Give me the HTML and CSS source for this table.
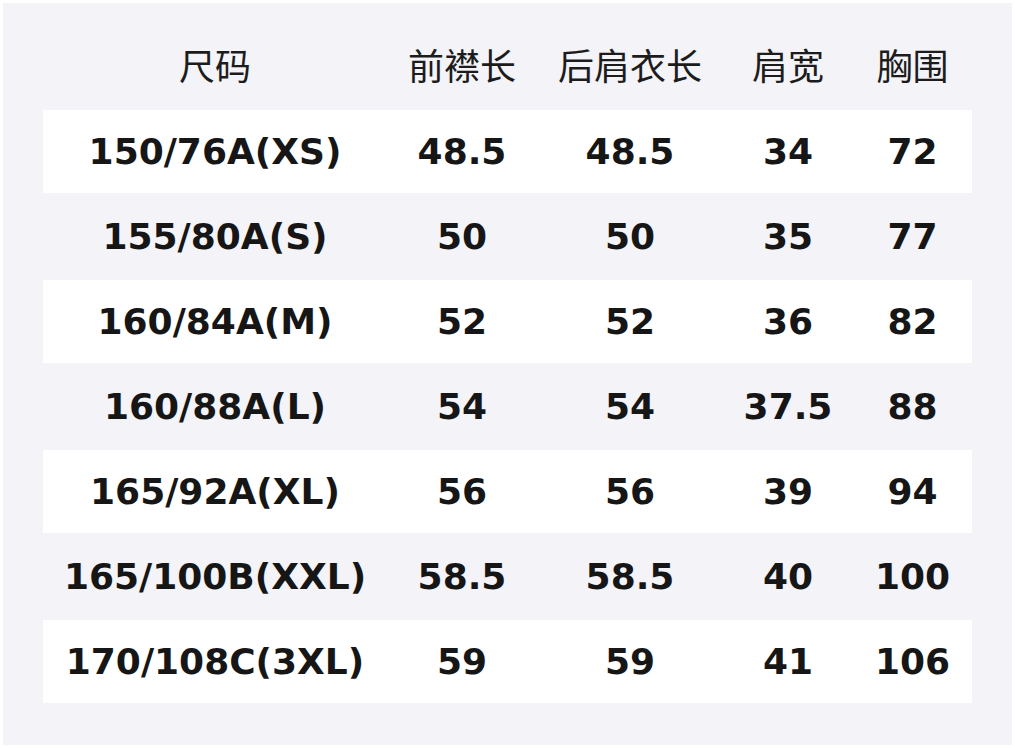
FILE: index.html
```html
<!DOCTYPE html>
<html lang="zh">
<head>
<meta charset="utf-8">
<title>尺码表</title>
<link rel="stylesheet" href="styles.css">
</head>
<body>
<div class="panel">
  <div class="table">
    <div class="row head">
      <div class="cell">尺码</div><div class="cell">前襟长</div><div class="cell">后肩衣长</div><div class="cell">肩宽</div><div class="cell">胸围</div>
    </div>
    <div class="row white">
      <div class="cell">150/76A(XS)</div><div class="cell">48.5</div><div class="cell">48.5</div><div class="cell">34</div><div class="cell">72</div>
    </div>
    <div class="row">
      <div class="cell">155/80A(S)</div><div class="cell">50</div><div class="cell">50</div><div class="cell">35</div><div class="cell">77</div>
    </div>
    <div class="row white">
      <div class="cell">160/84A(M)</div><div class="cell">52</div><div class="cell">52</div><div class="cell">36</div><div class="cell">82</div>
    </div>
    <div class="row">
      <div class="cell">160/88A(L)</div><div class="cell">54</div><div class="cell">54</div><div class="cell">37.5</div><div class="cell">88</div>
    </div>
    <div class="row white">
      <div class="cell">165/92A(XL)</div><div class="cell">56</div><div class="cell">56</div><div class="cell">39</div><div class="cell">94</div>
    </div>
    <div class="row">
      <div class="cell">165/100B(XXL)</div><div class="cell">58.5</div><div class="cell">58.5</div><div class="cell">40</div><div class="cell">100</div>
    </div>
    <div class="row white">
      <div class="cell">170/108C(3XL)</div><div class="cell">59</div><div class="cell">59</div><div class="cell">41</div><div class="cell">106</div>
    </div>
  </div>
</div>
</body>
</html>
```
FILE: styles.css
```css
html, body {
  margin: 0;
  padding: 0;
  background: #ffffff;
}
body {
  width: 1015px;
  height: 748px;
  padding: 3px;
  box-sizing: border-box;
}
.panel {
  width: 1009px;
  height: 742px;
  background: #f3f3f8;
  padding: 22px 0 0 40px;
  box-sizing: border-box;
}
.table {
  width: 929px;
  display: flex;
  flex-direction: column;
  gap: 2px;
}
.row {
  display: grid;
  grid-template-columns: 344px 150px 186px 130px 119px;
  height: 83px;
  align-items: center;
}
.row.white {
  background: #ffffff;
}
.row.head {
  padding-bottom: 6px;
  box-sizing: border-box;
}
.cell {
  text-align: center;
  font-family: "DejaVu Sans", Verdana, sans-serif;
  font-weight: bold;
  font-size: 36px;
  color: #161616;
  white-space: nowrap;
}
.head .cell {
  font-family: "Noto Sans CJK SC", "Noto Sans", sans-serif;
  font-weight: normal;
  font-size: 36px;
  color: #1c1c1c;
}
```
